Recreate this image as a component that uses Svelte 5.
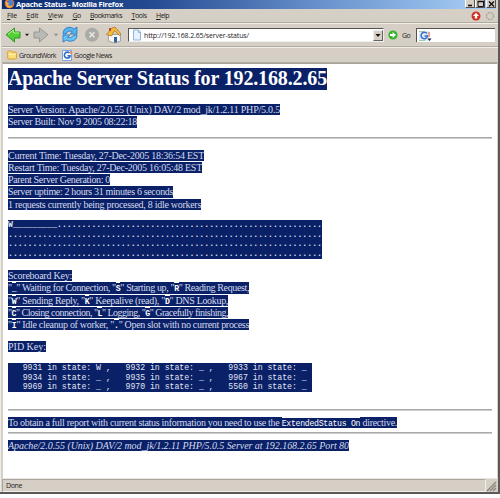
<script>
  const menus = [['File', 10], ['Edit', 12], ['View', 15], ['Go', 8], ['Bookmarks', 32], ['Tools', 15], ['Help', 13]];
  const version = [
    ['Server Version: Apache/2.0.55 (Unix) DAV/2 mod_jk/1.2.11 PHP/5.0.5', 272],
    ['Server Built: Nov 9 2005 08:22:18', 129]
  ];
  const times = [
    ['Current Time: Tuesday, 27-Dec-2005 18:36:54 EST', 196],
    ['Restart Time: Tuesday, 27-Dec-2005 16:05:48 EST', 194],
    ['Parent Server Generation: 0', 102],
    ['Server uptime: 2 hours 31 minutes 6 seconds', 165],
    ['1 requests currently being processed, 8 idle workers', 193]
  ];
  const board = ['W_________' + '.'.repeat(54), '.'.repeat(64), '.'.repeat(64), '.'.repeat(64)];
  const keys = [
    [[['_', 'Waiting for Connection,'], ['S', 'Starting up,'], ['R', 'Reading Request,']], 241],
    [[['W', 'Sending Reply,'], ['K', 'Keepalive (read),'], ['D', 'DNS Lookup,']], 220],
    [[['C', 'Closing connection,'], ['L', 'Logging,'], ['G', 'Gracefully finishing,']], 220],
    [[['I', 'Idle cleanup of worker,'], ['.', 'Open slot with no current process']], 241]
  ];
  const pids = [
    '   9931 in state: W ,   9932 in state: _ ,   9933 in state: _ ',
    '   9934 in state: _ ,   9935 in state: _ ,   9967 in state: _ ',
    '   9969 in state: _ ,   9970 in state: _ ,   5560 in state: _ '
  ];

  // Tracks the letters so that the run fills the given width.
  function fit(node, width) {
    const n = node.textContent.length;
    node.style.letterSpacing = '0px';
    const natural = node.getBoundingClientRect().width;
    node.style.letterSpacing = (width - natural) / n + 'px';
  }
</script>

<div class="window">
  <header class="title">
    <svg class="fox" width="11" height="9" viewBox="0 0 11 9"><circle cx="5.5" cy="3.5" r="4.8" fill="#e8752a"/><circle cx="6.2" cy="3" r="3" fill="#4b7fd0"/><path d="M1 1Q3 3 5 3L4 5Q6 7 9 5Q7 9 3 7Z" fill="#f8b040"/></svg>
    <b use:fit={107}>Apache Status - Mozilla Firefox</b>
    <span class="grow"></span>
    <span class="wb"><svg width="9" height="8"><path d="M2 5.5h4" stroke="#111" stroke-width="1.6"/></svg></span>
    <span class="wb"><svg width="9" height="8"><path d="M2 1.5h5.500v5H2z" fill="none" stroke="#111"/><path d="M1.500 1.500h6.500" stroke="#111" stroke-width="1.5"/></svg></span>
    <span class="wb last"><svg width="9" height="8"><path d="M2 1.500l5 5M7 1.500l-5 5" stroke="#111" stroke-width="1.4"/></svg></span>
  </header>

  <nav class="menu">
    {#each menus as [m, w]}<span class="mi" style="width:{w}px"><span use:fit={w}><u>{m[0]}</u>{m.slice(1)}</span></span>{/each}
    <span class="grow"></span>
    <svg width="10" height="10" viewBox="0 0 10 10"><circle cx="5" cy="5" r="4.5" fill="#cf3021"/><path d="M5 1.800L8 5H6.200v2.500H3.800V5H2z" fill="#fff"/></svg>
    <svg class="throb" width="10" height="10" viewBox="0 0 10 10"><circle cx="5" cy="5" r="3.5" fill="none" stroke="#aaa9a5" stroke-width="1.6" stroke-dasharray="1.9 .85"/></svg>
  </nav>

  <div class="tools">
    <svg width="119" height="20" viewBox="0 0 119 20">
      <path d="M4 9.700L12.500 3v4H18v6h-5.500v4z" fill="#54ce35" stroke="#2b992b"/><path d="M6 9.300L11.500 5v3H17" fill="none" stroke="#b2f28b"/>
      <path d="M23 8.700h4l-2 2.500z" fill="#222"/>
      <path d="M46 9.700L37.500 3v4H32v6h5.500v4z" fill="#b9b9b5" stroke="#979894"/>
      <path d="M52 8.700h4l-2 2.500z" fill="#888"/>
      <path d="M61 9Q61 3 67 2.300Q70 2 72 4l3-2v7h-7l2.500-2Q66 4.500 64 9z" fill="#55b4ed" stroke="#2374c4" stroke-width=".8"/>
      <path d="M75 10Q75 15 70 16Q67 17 64.500 15L61 17v-7h7l-2.500 2.500Q69 14 72 10z" fill="#68c3f4" stroke="#2374c4" stroke-width=".8"/>
      <circle cx="90" cy="9.7" r="7" fill="#aaaaa7"/><path d="M87.500 7.200l5 5M92.500 7.200l-5 5" stroke="#e9e7e3" stroke-width="1.6"/>
      <path d="M106.500 9.500h12v6.500l-6 2-6-2z" fill="#f7f7f3" stroke="#888" stroke-width=".7"/>
      <path d="M104.500 9.500L110 3l3-1 6 7-1.500 1.500-5-5-3 5.500z" fill="#f4bc3b" stroke="#a86c20" stroke-width=".7"/>
      <path d="M112 12h3v5.500h-3z" fill="#37629a"/><path d="M107 3h2v3h-2z" fill="#b54c2e"/>
    </svg>
    <div class="url">
      <svg width="14" height="12" viewBox="0 0 14 12"><path d="M4.500 1h5l2 2v8h-7z" fill="#e8f2fd" stroke="#8fb4dc"/><path d="M9.500 1v2.500h2" fill="none" stroke="#8fb4dc"/></svg>
      <span class="addr" use:fit={105}>http://192.168.2.65/server-status/</span>
      <span class="grow"></span>
      <span class="drop"><svg width="8" height="9"><path d="M1.500 3h5L4 6z" fill="#111"/></svg></span>
    </div>
    <svg class="go" width="10" height="10" viewBox="0 0 10 10"><circle cx="5" cy="5" r="4.6" fill="#37b52e"/><path d="M2 4h2.600V2L8 5 4.600 8V6H2z" fill="#fff"/></svg>
    <span class="golabel" use:fit={8}>Go</span>
    <div class="search">
      <svg width="14" height="12" viewBox="0 0 14 12"><path d="M1 1h10v10H1z" fill="#dfebfa"/><path d="M1 1h5v1H1zM1 10h6v1H1z" fill="#9cd49c"/><path d="M10 2h2v5h-2z" fill="#e9a48b"/><path d="M9 3.500A3.300 3.300 0 1 0 9.300 7V6H6.500" fill="none" stroke="#3a6fc8" stroke-width="1.500"/><path d="M9.500 8.500h4L11.500 11z" fill="#102040"/></svg>
    </div>
  </div>

  <div class="marks">
    <svg width="10" height="10" viewBox="0 0 10 10"><path d="M.7 2Q.7 1 2 1h2l1 1.200h3.500q1 0 1 1V8q0 1-1 1H1.700q-1 0-1-1z" fill="#fbdc77" stroke="#d9a32d"/><path d="M1.500 4.500h7" stroke="#fff3bd"/></svg>
    <span class="mk" style="width:37px"><span use:fit={37}>GroundWork</span></span>
    <svg class="gn" width="10" height="11" viewBox="0 0 10 11"><path d="M.5.5h9v10h-9z" fill="#fff" stroke="#75a5e8"/><path d="M7.500 3A3 3 0 1 0 8 6.500V5.800H5.500" fill="none" stroke="#3268c9" stroke-width="1.600"/><path d="M8 1h2v3H8z" fill="#e88c6c"/></svg>
    <span class="mk" use:fit={38}>Google News</span>
  </div>

  <main>
    <h1><span use:fit={319}>Apache Server Status for 192.168.2.65</span></h1>
    <section class="version">{#each version as [t, w]}<p><span use:fit={w}>{t}</span></p>{/each}</section>
    <hr />
    <section class="times">{#each times as [t, w]}<p><span use:fit={w}>{t}</span></p>{/each}</section>
    <pre class="board">{#each board as t}<span class="row"><span use:fit={314}>{t}</span></span>{/each}</pre>
    <section class="keys">
      <p><span use:fit={64}>Scoreboard Key:</span></p>
      {#each keys as [items, w]}<p><span use:fit={w}>{#each items as [k, t], i}{i ? ' ' : ''}"<b>{k}</b>" {t}{/each}</span></p>{/each}
    </section>
    <section class="pid"><p><span use:fit={38}>PID Key:</span></p></section>
    <pre class="pids">{#each pids as t}<span class="row"><span use:fit={303.5}>{t}</span></span>{/each}</pre>
    <hr />
    <section class="note"><p><span use:fit={389}>To obtain a full report with current status information you need to use the <code>ExtendedStatus On</code> directive.</span></p></section>
    <hr />
    <section class="sig"><p><i use:fit={341}>Apache/2.0.55 (Unix) DAV/2 mod_jk/1.2.11 PHP/5.0.5 Server at 192.168.2.65 Port 80</i></p></section>
  </main>

  <footer>
    <div class="status"><span use:fit={16}>Done</span></div>
    <svg width="11" height="13"><path d="M1 12L10 3M4 12L10 6M7 12L10 9" stroke="#8c8983" stroke-width="1.500"/></svg>
  </footer>
</div>

<style>
  :global(body) { background: #fff; overflow: hidden; }
  * { box-sizing: border-box; }
  .window { width: 500px; height: 494px; display: flex; flex-direction: column; background: #d6cfc5; border-right: 2px solid #5c5a58; border-bottom: 2px solid #5c5a58; padding-left: 2px; font-family: "Open Sans", sans-serif; font-size: 7px; color: #222; white-space: nowrap; box-shadow: inset 1px 0 #eeece8; }
  .grow { flex: 1; }
  .title { height: 9px; display: flex; align-items: flex-start; margin-right: 2px; background: linear-gradient(90deg, #0a2b70, #244b91 30%, #6b94cf 66%, #a2c9f1 95%); color: #fff; overflow: hidden; }
  .title b { font-size: 7.5px; line-height: 9px; margin-left: 1px; font-weight: 700; }
  .fox { margin-left: 2px; }
  .wb { width: 10px; height: 8px; display: flex; background: #d6cfc5; border-right: 1px solid #55524e; border-bottom: 1px solid #55524e; border-left: 1px solid #fff; }
  .wb.last { margin-left: 1px; }
  .menu { height: 14px; display: flex; align-items: center; padding: 1px 3px 0 5px; border-bottom: 1px solid #b1aba2; line-height: 12px; }
  .mi { margin-right: 9.5px; }
  .menu u { text-decoration-thickness: 1px; text-underline-offset: 1px; }
  .throb { margin-left: 4px; }
  .tools { height: 24px; display: flex; align-items: center; border-top: 1px solid #f1eee9; border-bottom: 1px solid #b1aba2; }
  .url { width: 256px; height: 14px; margin-left: 7px; display: flex; align-items: center; background: #fff; border-top: 1px solid #55534f; border-left: 1px solid #55534f; border-right: 1px solid #eee; border-bottom: 1px solid #eee; }
  .addr { margin-left: 1px; font-size: 7px; }
  .drop { display: flex; width: 10px; height: 11px; background: #d6cfc5; border: 1px solid #f1eee9; border-right-color: #66635f; border-bottom-color: #66635f; }
  .go { margin-left: 4px; }
  .golabel { margin-left: 4px; }
  .search { height: 14px; width: 79px; display: flex; align-items: center; margin-left: 6px; background: #fff; border-top: 1px solid #55534f; border-left: 1px solid #55534f; padding-left: 1px; }
  .marks { height: 16px; display: flex; align-items: center; padding-left: 5px; border-top: 1px solid #f1eee9; border-bottom: 1px solid #b1aba2; }
  .mk { margin-left: 2px; }
  .gn { margin-left: 6px; }
  main { height: 415px; background: #fff; margin-left: 1px; margin-right: 1px; padding: 4px 5px 0; color: #fff; font-family: "Liberation Serif", serif; font-size: 10px; border-top: 1px solid #aaa59e; }
  h1 { margin: 0; height: 22px; font-size: 20px; line-height: 21px; }
  h1 span { height: 22px; }
  h1 span, p > span, p > i, .row > span { display: inline-block; background: #0a2168; vertical-align: top; white-space: pre; }
  p { margin: 0; height: 12.300px; }
  p > span, p > i { height: 11.300px; line-height: 11.300px; color: #d5daec; }
  hr { margin: 0; height: 2px; width: 484px; border: 0; border-top: 1px solid #aaa; background: #ccc; }
  .version { height: 34px; margin-top: 14px; }
  .version + hr { margin-top: -1px; }
  .times { margin-top: 10.600px; height: 61px; }
  pre { margin: 0; font-family: "Liberation Mono", monospace; font-size: 8.200px; display: flex; flex-direction: column; }
  .row { display: block; height: 9.750px; line-height: 9.750px; }
  .row > span { height: 10px; line-height: 9.750px; color: #e2e5f3; }
  .board { margin-top: 9.400px; height: 39px; }
  .board .row > span { font-weight: 700; }
  .keys { margin-top: 11px; height: 61px; }
  .keys b, code { font-family: "Liberation Mono", monospace; font-size: 8.200px; color: #fff; }
  .keys b, code { display: inline-block; height: 11px; line-height: 11px; vertical-align: top; border-top: 1px solid #fff; }
  .pid { margin-top: 10px; height: 12px; }
  .pids { margin-top: 10px; height: 29px; }
  .pids + hr { margin-top: 17px; }
  .note { margin-top: 6px; height: 12px; }
  .note + hr { margin-top: 3px; }
  .sig { margin-top: 6px; }
  footer { flex: 1; display: flex; align-items: center; border-top: 1px solid #e8e5df; }
  .status { width: 484px; height: 13px; line-height: 11px; border: 1px solid #aaa59e; border-bottom-color: #f1eee9; border-right-color: #f1eee9; padding-left: 3px; }
</style>
